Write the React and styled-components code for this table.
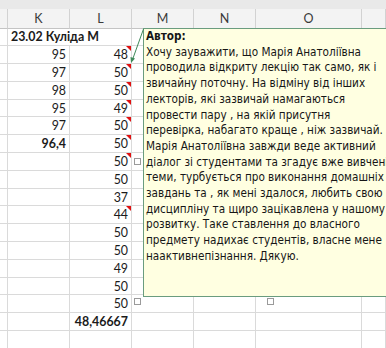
import React from "react";
import styled, { createGlobalStyle } from "styled-components";

const GlobalStyle = createGlobalStyle`
  html, body {
    margin: 0;
    padding: 0;
    background: #ffffff;
    overflow: hidden;
  }
`;

const rows = [
  { k: "23.02 Кулiда М", head: true },
  { k: "95", l: "48", note: true },
  { k: "97", l: "50", note: true },
  { k: "98", l: "50", note: true },
  { k: "95", l: "49", note: true },
  { k: "97", l: "50", note: true },
  { k: "96,4", l: "50", note: true, bold: true },
  { l: "50", note: true },
  { l: "50" },
  { l: "37" },
  { l: "44", note: true },
  { l: "50" },
  { l: "50" },
  { l: "49" },
  { l: "50" },
  { l: "50" },
  { l: "48,46667", total: true },
  {},
];

const columns = ["", "K", "L", "M", "N", "O", ""];

const commentLines = [
  "Хочу зауважити, що Марія Анатоліївна",
  "проводила відкриту лекцію так само, як і",
  "звичайну поточну. На відміну від інших",
  "лекторів, які зазвичай намагаються",
  "провести пару , на якій присутня",
  "перевірка, набагато краще , ніж зазвичай.",
  "Марія Анатоліївна завжди веде активний",
  "діалог зі студентами та згадує вже вивчені",
  "теми, турбується про виконання домашніх",
  "завдань та , як мені здалося, любить свою",
  "дисципліну та щиро зацікавлена у нашому",
  "розвитку. Таке ставлення до власного",
  "предмету надихає студентів, власне мене",
  "наактивнепізнання. Дякую.",
];

function App() {
  return (
    <>
      <GlobalStyle />
      <Sheet>
        <TopBand />
        <Grid>
          {columns.map((c, i) => (
            <HeaderCell key={"h" + i}>{c}</HeaderCell>
          ))}
          {rows.map((r, i) => (
            <React.Fragment key={i}>
              <Cell />
              {r.head ? (
                <Cell $span={2} $bold>
                  {r.k}
                </Cell>
              ) : (
                <>
                  <Cell $align="right" $bold={r.bold}>
                    {r.k}
                  </Cell>
                  <Cell $align="right" $bold={r.total}>
                    {r.l}
                    {r.note && <NoteMark />}
                  </Cell>
                </>
              )}
              <Cell />
              <Cell />
              <Cell />
              <Cell />
            </React.Fragment>
          ))}
        </Grid>

        <Comment>
          <Author>Автор:</Author>
          {commentLines.map((t, i) => (
            <Line key={i}>{t}</Line>
          ))}
        </Comment>

        {/* pointer from the note to its cell */}
        <Arrow width="22" height="42" viewBox="0 0 22 42">
          <line x1="17.5" y1="4" x2="6" y2="36" stroke="#3f8a5a" strokeWidth="1" />
          <path d="M5 38 L4.5 32 L9 33.5 Z" fill="#3f8a5a" />
        </Arrow>

        <Handle style={{ left: 134, top: 158 }} />
        <Handle style={{ left: 134, top: 298 }} />
        <Handle style={{ left: 267, top: 298 }} />
      </Sheet>
    </>
  );
}

const Sheet = styled.div`
  position: relative;
  width: 386px;
  height: 348px;
  overflow: hidden;
  font-family: Lato, "Liberation Sans", sans-serif;
  color: #1b1b1b;
`;

const TopBand = styled.div`
  height: 9px;
  background: #e9e9e9;
`;

const Grid = styled.div`
  display: grid;
  grid-template-columns: 8px 62px 62px 62px 62px 106px 1fr;
  grid-template-rows: 19.5px;
  grid-auto-rows: 17.8px;
`;

const HeaderCell = styled.div`
  box-sizing: border-box;
  background: #f3f3f3;
  border-right: 1px solid #d2d2d2;
  border-bottom: 1px solid #c4c4c4;
  display: flex;
  align-items: center;
  justify-content: center;
  font-size: 12.5px;
  color: #3a3a3a;
`;

const Cell = styled.div`
  position: relative;
  box-sizing: border-box;
  grid-column: span ${(p) => p.$span || 1};
  border-right: 1px solid #dadada;
  border-bottom: 1px solid #dadada;
  display: flex;
  align-items: center;
  justify-content: ${(p) => (p.$align === "right" ? "flex-end" : "flex-start")};
  padding: 0 3px 0 3px;
  font-size: 12.4px;
  font-weight: ${(p) => (p.$bold ? 700 : 400)};
  white-space: nowrap;
`;

const NoteMark = styled.span`
  position: absolute;
  top: 0;
  right: 0;
  width: 0;
  height: 0;
  border-top: 5px solid #e01010;
  border-left: 5px solid transparent;
`;

const Comment = styled.div`
  position: absolute;
  left: 143px;
  top: 28px;
  width: 320px;
  height: 269px;
  box-sizing: border-box;
  background: #ffffe1;
  border: 1px solid #6a9c7e;
  padding: 0 0 0 2px;
  font-family: "DejaVu Sans Condensed", "DejaVu Sans", sans-serif;
  font-size: 11.65px;
  line-height: 15.7px;
  color: #161616;
  white-space: nowrap;
`;

const Author = styled.div`
  font-weight: 700;
`;

const Line = styled.div``;

const Arrow = styled.svg`
  position: absolute;
  left: 126px;
  top: 25px;
`;

const Handle = styled.div`
  position: absolute;
  width: 7px;
  height: 7px;
  box-sizing: border-box;
  background: #ffffff;
  border: 1px solid #9a9a9a;
`;

export default App;
